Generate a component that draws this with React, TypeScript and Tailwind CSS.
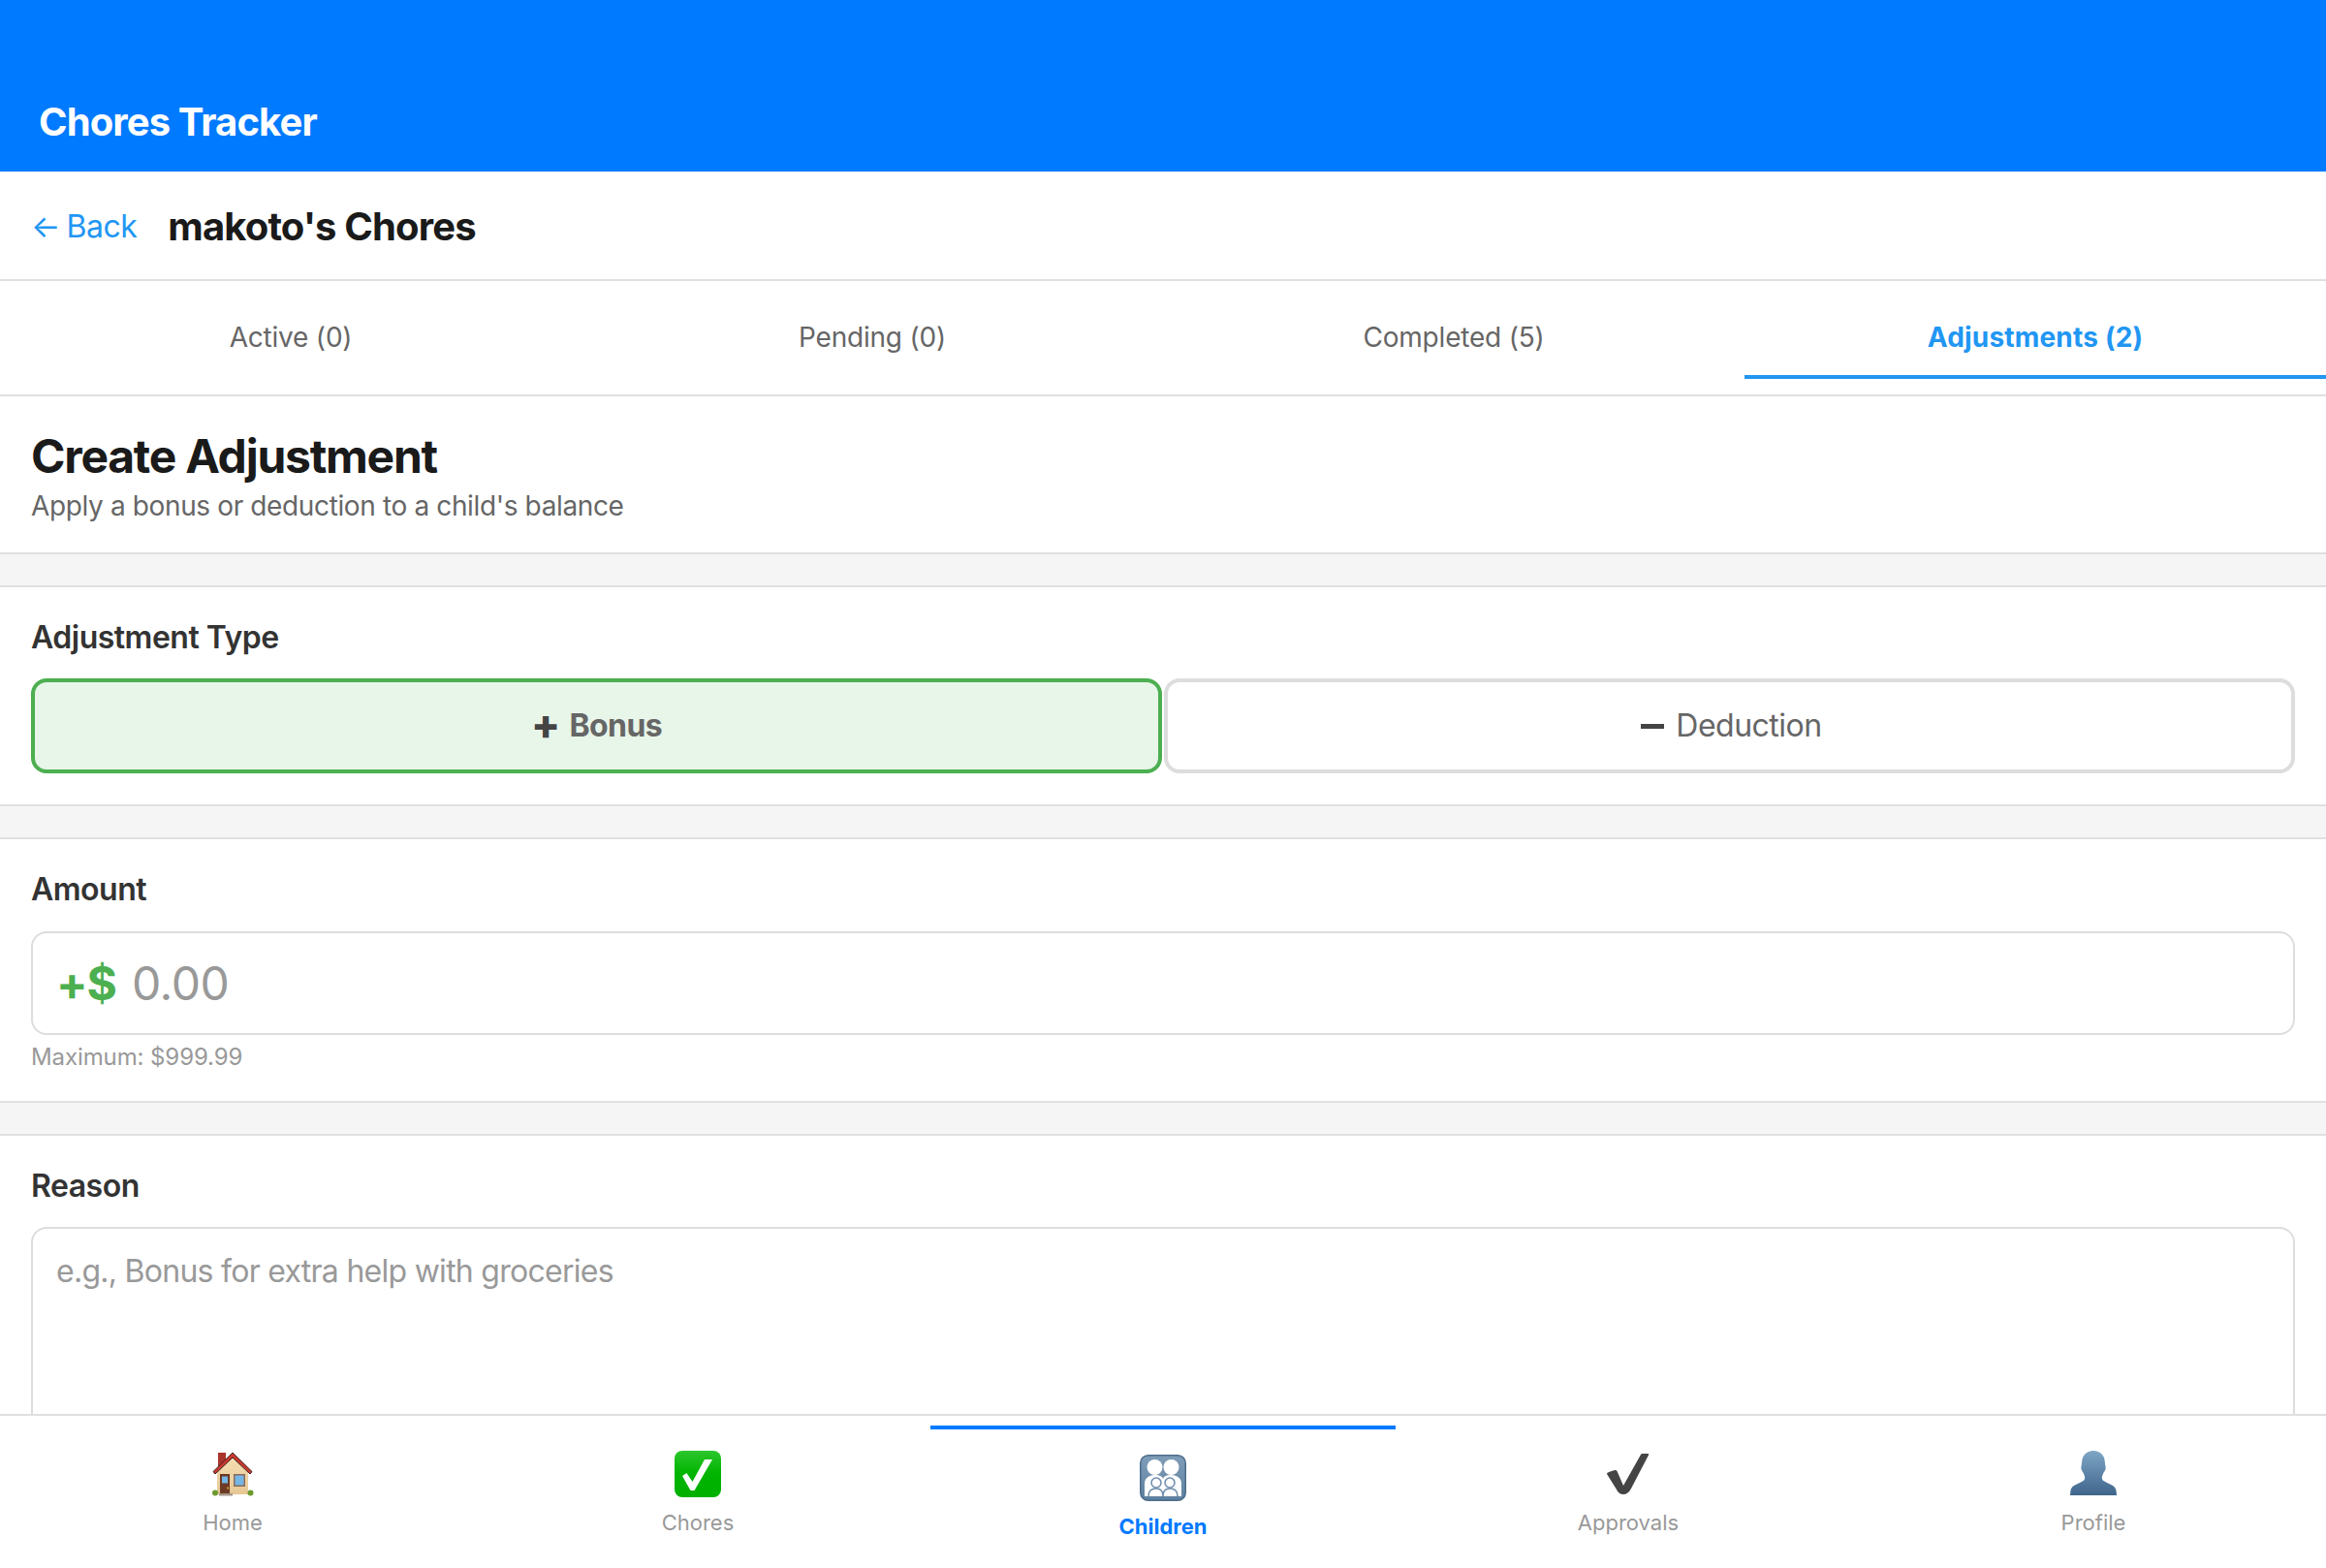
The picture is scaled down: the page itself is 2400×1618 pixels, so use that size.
const FONT = "font-['Inter','Liberation_Sans',sans-serif]";

function HomeIcon() {
  return (
    <svg width="48" height="48" viewBox="0 0 48 48">
      <defs>
        <linearGradient id="wall" x1="0" y1="0" x2="0" y2="1">
          <stop offset="0" stopColor="#f6dfb4" />
          <stop offset="1" stopColor="#e6c794" />
        </linearGradient>
      </defs>
      <rect x="9" y="2" width="8" height="14" fill="#a9342c" />
      <path d="M8 21 24 5l16 16v24H8z" fill="url(#wall)" />
      <path d="M4 21.500 24 2l20 19.500-2 2.500L24 7 6 24z" fill="#c9382e" stroke="#3a2420" strokeWidth="1" />
      <rect x="11" y="24" width="10" height="21" fill="#6d3a24" />
      <rect x="13" y="26.500" width="6" height="7" fill="#74b6e6" />
      <circle cx="19" cy="38.500" r="0.900" fill="#f0c040" />
      <rect x="25" y="24" width="12" height="13" fill="#8a6a58" />
      <rect x="26.500" y="25.500" width="9" height="10" fill="#74b6e6" />
      <rect x="10" y="44" width="14" height="2.500" fill="#a5968a" />
      <circle cx="6" cy="43.500" r="3" fill="#6c9a2e" />
      <circle cx="42.500" cy="43.500" r="3" fill="#6c9a2e" />
    </svg>
  );
}

function ChoresIcon() {
  return (
    <svg width="48" height="48" viewBox="0 0 48 48">
      <defs>
        <linearGradient id="green" x1="0" y1="0" x2="0" y2="1">
          <stop offset="0" stopColor="#2cc62c" />
          <stop offset="0.5" stopColor="#00b400" />
          <stop offset="1" stopColor="#00b000" />
        </linearGradient>
      </defs>
      <rect x="0" y="0" width="48" height="48" rx="8" fill="url(#green)" />
      <path d="M8 26l4.500-3 6 9L31 9h8L20.500 41h-4z" fill="#fff" />
    </svg>
  );
}

function ChildrenIcon() {
  return (
    <svg width="48" height="48" viewBox="0 0 48 48">
      <defs>
        <linearGradient id="slate" x1="0" y1="0" x2="0" y2="1">
          <stop offset="0" stopColor="#7f9db8" />
          <stop offset="1" stopColor="#5e80a0" />
        </linearGradient>
      </defs>
      <rect x="0.750" y="0.750" width="46.500" height="46.500" rx="8" fill="url(#slate)" stroke="#4d6d8a" strokeWidth="1.500" />
      <circle cx="15.500" cy="13" r="8" fill="#fff" />
      <circle cx="32.500" cy="13" r="8" fill="#fff" />
      <path d="M5 43V30c0-6 5-9 11-9 4 0 7 1 8 4 1-3 4-4 8-4 6 0 11 3 11 9v13z" fill="#fff" />
      <circle cx="17" cy="29" r="5" fill="#fff" stroke="#6d8dab" strokeWidth="1.500" />
      <circle cx="31" cy="29" r="5" fill="#fff" stroke="#6d8dab" strokeWidth="1.500" />
      <path d="M9 43c0-5 3-8 8-8s7 3 7 8c0-5 2-8 7-8s8 3 8 8" fill="#fff" stroke="#6d8dab" strokeWidth="1.500" />
    </svg>
  );
}

function ApprovalsIcon() {
  return (
    <svg width="48" height="48" viewBox="0 0 48 48">
      <path
        d="M2 24C2 23 3 22.500 4 22L10 20C11 19.700 12 20 12.500 21L19 36 37 4C37.500 3 38 3 39 3L44 3C45 3 45.500 3.500 45 4.500L27 39C25 43 22 45 19 45 16 45 13.500 43.500 12 40Z"
        fill="#444"
      />
    </svg>
  );
}

function ProfileIcon() {
  return (
    <svg width="48" height="48" viewBox="0 0 48 48">
      <defs>
        <linearGradient id="bust" x1="0" y1="0" x2="0" y2="1">
          <stop offset="0" stopColor="#7ea6c6" />
          <stop offset="1" stopColor="#3f658c" />
        </linearGradient>
      </defs>
      <path d="M24 0c7 0 12 5 12 13 0 2 1 3 .500 6-.500 2-2 3-3 6-1 2-1 5 1 6 4 3 12 4 13 10l.500 5H0l.500-5c1-6 9-7 13-10 2-1 2-4 1-6-1-3-2.500-4-3-6-.500-3 .500-4 .500-6C12 5 17 0 24 0z" fill="url(#bust)" />
    </svg>
  );
}

const TABS = [
  { label: "Active (0)" },
  { label: "Pending (0)" },
  { label: "Completed (5)" },
  { label: "Adjustments (2)", active: true },
];

const NAV = [
  { label: "Home", icon: <HomeIcon /> },
  { label: "Chores", icon: <ChoresIcon /> },
  { label: "Children", icon: <ChildrenIcon />, active: true },
  { label: "Approvals", icon: <ApprovalsIcon /> },
  { label: "Profile", icon: <ProfileIcon /> },
];

function Gap() {
  return <div className="h-[36px] shrink-0 border-y-2 border-[#e0e0e0] bg-[#f5f5f5]" />;
}

export default function App() {
  return (
    <div className={`flex h-screen flex-col overflow-hidden bg-white ${FONT}`}>
      <header className="flex h-[177px] shrink-0 items-end bg-[#007aff] px-10 pb-[26px]">
        <h1 className="text-[40px] leading-[50px] font-bold tracking-[-0.9px] text-white">Chores Tracker</h1>
      </header>

      <div className="flex h-[113px] shrink-0 items-center border-b-2 border-[#e0e0e0] pt-[2px] pl-8">
        <button type="button" className="text-[32px] leading-10 tracking-[-0.5px] text-[#2196f3]">
          <span className="mr-[-2px]">←</span> Back
        </button>
        <h2 className="ml-8 text-[40px] leading-[50px] font-bold tracking-[-0.85px] text-[#1a1a1a]">makoto's Chores</h2>
      </div>

      <div className="flex shrink-0 border-b-2 border-[#e0e0e0] pb-4">
        {TABS.map((t) => (
          <div
            key={t.label}
            className={`flex h-[101px] flex-1 items-center justify-center text-[28px] ${
              t.active
                ? "border-b-4 border-[#2196f3] pt-[18px] font-bold tracking-[0.2px] text-[#2196f3]"
                : "pt-[14px] tracking-[-0.2px] text-[#666]"
            }`}
          >
            {t.label}
          </div>
        ))}
      </div>

      <div className="min-h-0 flex-1 overflow-hidden">
        <section className="h-[161px] px-8 pt-[34px]">
          <h3 className="text-[48px] leading-[56px] font-bold tracking-[-1.25px] text-[#1a1a1a]">Create Adjustment</h3>
          <p className="mt-[3px] text-[28px] leading-[40px] tracking-[-0.37px] text-[#666]">Apply a bonus or deduction to a child's balance</p>
        </section>
        <Gap />

        <section className="h-[224px] px-8 pt-8">
          <h4 className="text-[32px] leading-[40px] font-semibold tracking-[-0.5px] text-[#333]">Adjustment Type</h4>
          <div className="mt-[22px] flex gap-[2px]">
            <button type="button" className="flex h-[98px] flex-1 items-center justify-center rounded-2xl border-4 border-[#4caf50] bg-[#e8f5e9] text-[32px] font-bold tracking-[-0.6px] text-[#666]">
              <span className="mt-[-4px] mr-[10px] text-[44px] leading-none font-extrabold text-[#444]">+</span>Bonus
            </button>
            <button type="button" className="flex h-[98px] flex-1 items-center justify-center rounded-2xl border-4 border-[#ddd] bg-white text-[32px] tracking-[-0.5px] text-[#666]">
              <span className="mr-[12px] ml-1 h-[5px] w-[24px] bg-[#444]" />Deduction
            </button>
          </div>
        </section>
        <Gap />

        <section className="h-[270px] px-8 pt-8">
          <h4 className="text-[32px] leading-[40px] font-semibold tracking-[-0.5px] text-[#333]">Amount</h4>
          <div className="mt-[23px] flex h-[107px] items-center rounded-2xl border-2 border-[#ddd] px-6">
            <span className="text-[48px] font-bold tracking-[-1px] text-[#4caf50]">+$</span>
            <input
              readOnly
              placeholder="0.00"
              className="ml-[16px] min-w-0 flex-1 text-[48px] tracking-[-0.5px] outline-none placeholder:text-[#999]"
            />
          </div>
          <p className="mt-[8px] text-[24px] leading-[30px] tracking-[-0.1px] text-[#999]">Maximum: $999.99</p>
        </section>
        <Gap />

        <section className="px-8 pt-8">
          <h4 className="text-[32px] leading-[40px] font-semibold tracking-[-0.5px] text-[#333]">Reason</h4>
          <textarea
            readOnly
            placeholder="e.g., Bonus for extra help with groceries"
            className="mt-[22px] block h-[240px] w-full resize-none rounded-2xl border-2 border-[#ddd] px-6 pt-[24px] text-[32px] leading-[40px] tracking-[-0.73px] outline-none placeholder:text-[#999]"
          />
        </section>
      </div>

      <nav className="flex h-[159px] shrink-0 border-t-2 border-[#e0e0e0] bg-white pt-[10px]">
        {NAV.map((n) => (
          <div
            key={n.label}
            className={`flex flex-1 flex-col items-center pt-[26px] ${n.active ? "border-t-4 border-[#007aff]" : ""}`}
          >
            {n.icon}
            <span className={`mt-[11px] text-[22px] leading-[30px] ${n.active ? "font-bold text-[#007aff]" : "text-[#999]"}`}>
              {n.label}
            </span>
          </div>
        ))}
      </nav>
    </div>
  );
}
